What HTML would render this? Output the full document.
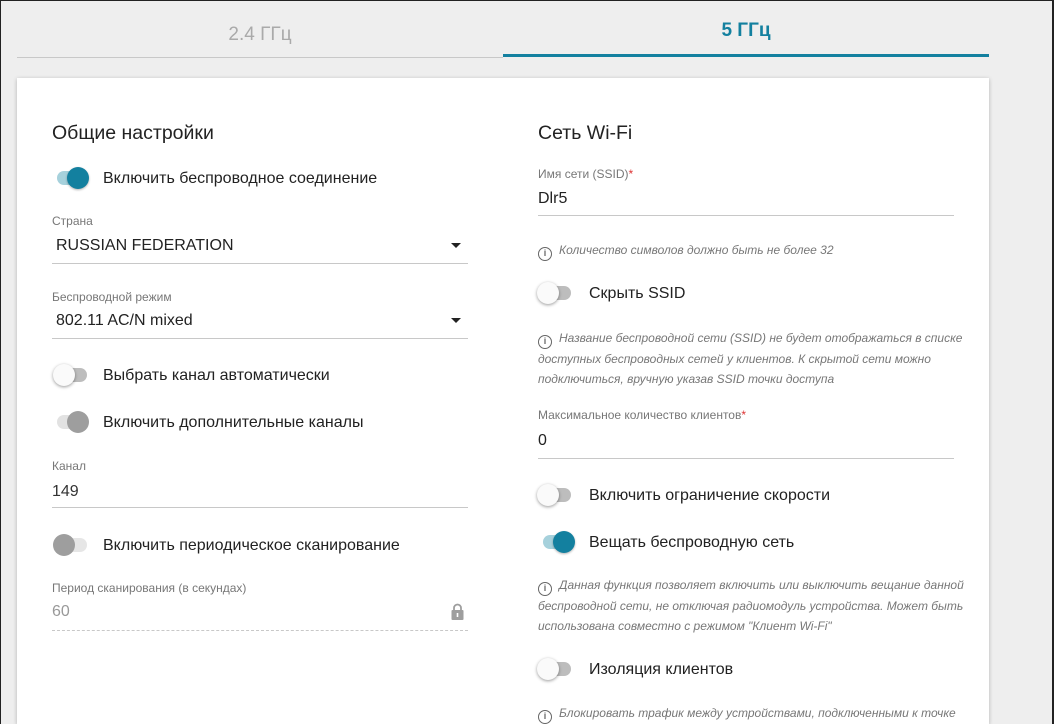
<!DOCTYPE html>
<html><head><meta charset="utf-8"><style>
*{margin:0;padding:0;box-sizing:border-box}
html,body{width:1054px;height:724px;overflow:hidden}
body{background:#eeeeee;font-family:"Liberation Sans","DejaVu Sans",sans-serif;position:relative;color:#222}
.frame{position:absolute;left:0;top:0;width:1054px;height:724px;border-top:1px solid #222;border-left:1px solid #222;border-right:2px solid #222;pointer-events:none;z-index:9}
.a{position:absolute;white-space:nowrap}
.card{position:absolute;left:17px;top:78px;width:972px;height:646px;background:#fff;box-shadow:0 1px 4px rgba(0,0,0,.25)}
.h{font-size:19.5px;color:#222;line-height:24px}
.lbl{font-size:12px;color:#777;line-height:16px}
.val{font-size:16px;color:#222;line-height:20px}
.t{font-size:16px;color:#222;line-height:20px}
.line{position:absolute;height:1px;background:#c8c8c8}
.hint{font-size:12px;color:#777;font-style:italic;line-height:20px}
.tg{position:absolute;width:36px;height:22px}
.tg .tr{position:absolute;left:4px;top:4px;width:30px;height:14px;border-radius:7px}
.tg .kn{position:absolute;top:0;width:22px;height:22px;border-radius:50%}
.on .tr{background:#a6d1dc}.on .kn{left:14px;background:#13809f;box-shadow:0 1px 2px rgba(0,0,0,.3)}
.off .tr{background:#bdbdbd}.off .kn{left:0;background:#fafafa;box-shadow:0 1px 3px rgba(0,0,0,.4)}
.don .tr{background:#e2e2e2}.don .kn{left:14px;background:#9e9e9e}
.doff .tr{background:#e6e6e6}.doff .kn{left:0;background:#9e9e9e}
.arr{position:absolute;width:0;height:0;border-left:5px solid transparent;border-right:5px solid transparent;border-top:5px solid #222}
.ic{display:inline-block;width:14px;height:14px;border:1.3px solid #666;border-radius:50%;font-size:9px;line-height:11px;text-align:center;color:#666;font-style:normal;font-weight:bold;vertical-align:-2px;margin-right:7px}
</style></head><body>
<div class="a" style="left:17px;top:22px;width:486px;text-align:center;font-size:19px;color:#aaa;line-height:26px">2.4 ГГц</div>
<div class="a" style="left:503px;top:18px;width:486px;text-align:center;font-size:19px;color:#13809f;font-weight:bold;line-height:26px">5 ГГц</div>
<div class="line" style="left:17px;top:57px;width:486px;background:#c8c8c8"></div>
<div class="a" style="left:503px;top:54px;width:486px;height:3px;background:#13809f"></div>

<div class="card"></div>

<div class="a h" style="left:52px;top:121px">Общие настройки</div>
<div class="tg on" style="left:53px;top:167px"><div class="tr"></div><div class="kn"></div></div>
<div class="a t" style="left:103px;top:169px">Включить беспроводное соединение</div>
<div class="a lbl" style="left:52px;top:213px">Страна</div>
<div class="a val" style="left:56px;top:236px">RUSSIAN FEDERATION</div>
<div class="arr" style="left:451px;top:243px"></div>
<div class="line" style="left:52px;top:263px;width:416px"></div>
<div class="a lbl" style="left:52px;top:289px">Беспроводной режим</div>
<div class="a val" style="left:56px;top:311px">802.11 AC/N mixed</div>
<div class="arr" style="left:451px;top:318px"></div>
<div class="line" style="left:52px;top:338px;width:416px"></div>
<div class="tg off" style="left:53px;top:364px"><div class="tr"></div><div class="kn"></div></div>
<div class="a t" style="left:103px;top:366px">Выбрать канал автоматически</div>
<div class="tg don" style="left:53px;top:411px"><div class="tr"></div><div class="kn"></div></div>
<div class="a t" style="left:103px;top:413px">Включить дополнительные каналы</div>
<div class="a lbl" style="left:52px;top:458px">Канал</div>
<div class="a val" style="left:52px;top:482px;color:#333">149</div>
<div class="line" style="left:52px;top:507px;width:416px"></div>
<div class="tg doff" style="left:53px;top:534px"><div class="tr"></div><div class="kn"></div></div>
<div class="a t" style="left:103px;top:536px">Включить периодическое сканирование</div>
<div class="a lbl" style="left:52px;top:580px">Период сканирования (в секундах)</div>
<div class="a val" style="left:52px;top:602px;color:#999">60</div>
<svg class="a" style="left:451px;top:603px" width="13" height="17" viewBox="0 0 13 17"><path d="M3 7V5a3.5 3.5 0 0 1 7 0v2" fill="none" stroke="#9e9e9e" stroke-width="1.8"/><rect x="0.5" y="7" width="12" height="10" rx="1" fill="#9e9e9e"/><rect x="5.7" y="10" width="1.6" height="4" fill="#fff"/></svg>
<div class="a" style="left:52px;top:630px;width:416px;border-top:1px dashed #c8c8c8"></div>

<div class="a h" style="left:538px;top:121px">Сеть Wi-Fi</div>
<div class="a lbl" style="left:538px;top:166px">Имя сети (SSID)<span style="color:#d33">*</span></div>
<div class="a val" style="left:538px;top:189px">Dlr5</div>
<div class="line" style="left:538px;top:215px;width:416px"></div>
<div class="a hint" style="left:538px;top:240px"><i class="ic">i</i>Количество символов должно быть не более 32</div>
<div class="tg off" style="left:537px;top:282px"><div class="tr"></div><div class="kn"></div></div>
<div class="a t" style="left:589px;top:284px">Скрыть SSID</div>
<div class="a hint" style="left:538px;top:328px"><i class="ic">i</i>Название беспроводной сети (SSID) не будет отображаться в списке<br>доступных беспроводных сетей у клиентов. К скрытой сети можно<br>подключиться, вручную указав SSID точки доступа</div>
<div class="a lbl" style="left:538px;top:407px">Максимальное количество клиентов<span style="color:#d33">*</span></div>
<div class="a val" style="left:538px;top:431px">0</div>
<div class="line" style="left:538px;top:458px;width:416px"></div>
<div class="tg off" style="left:537px;top:484px"><div class="tr"></div><div class="kn"></div></div>
<div class="a t" style="left:589px;top:486px">Включить ограничение скорости</div>
<div class="tg on" style="left:539px;top:531px"><div class="tr"></div><div class="kn"></div></div>
<div class="a t" style="left:589px;top:533px">Вещать беспроводную сеть</div>
<div class="a hint" style="left:538px;top:575px"><i class="ic">i</i>Данная функция позволяет включить или выключить вещание данной<br>беспроводной сети, не отключая радиомодуль устройства. Может быть<br>использована совместно с режимом "Клиент Wi-Fi"</div>
<div class="tg off" style="left:537px;top:658px"><div class="tr"></div><div class="kn"></div></div>
<div class="a t" style="left:589px;top:660px">Изоляция клиентов</div>
<div class="a hint" style="left:538px;top:703px"><i class="ic">i</i>Блокировать трафик между устройствами, подключенными к точке</div>
<div class="frame"></div>
</body></html>
